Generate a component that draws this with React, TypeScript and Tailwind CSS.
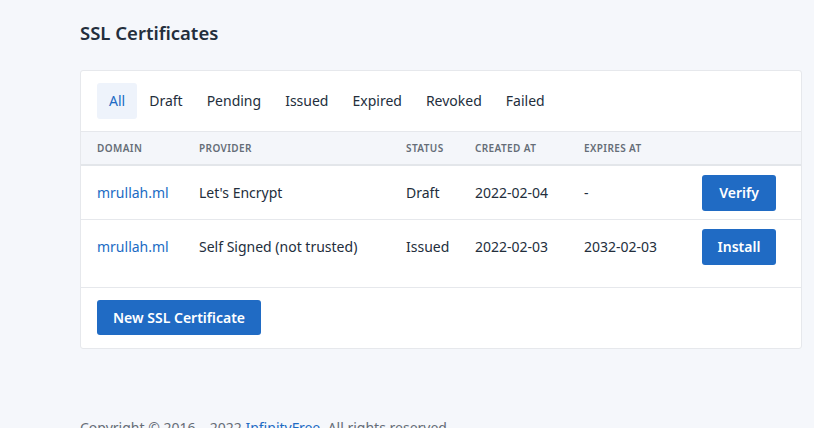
import React from "react";

const tabs = ["All", "Draft", "Pending", "Issued", "Expired", "Revoked", "Failed"];

const rows = [
  { domain: "mrullah.ml", provider: "Let's Encrypt", status: "Draft", created: "2022-02-04", expires: "-", action: "Verify" },
  { domain: "mrullah.ml", provider: "Self Signed (not trusted)", status: "Issued", created: "2022-02-03", expires: "2032-02-03", action: "Install" },
];

export default function App() {
  return (
    <div className="min-h-screen bg-[#f5f7fb] text-[#232e3c] font-['Noto_Sans',sans-serif] text-sm overflow-hidden">
      <div className="ml-[80px] w-[722px] pt-[20px]">
        <h2 className="text-[18.5px] leading-[26px] font-semibold text-[#232e3c]">SSL Certificates</h2>

        <div className="mt-[24px] bg-white border border-[#e6e8ec] rounded-[3px]">
          <div className="flex px-4 py-3">
            {tabs.map((t, i) => (
              <div
                key={t}
                className={
                  i === 0
                    ? "h-[36px] px-3 flex items-center rounded-[3px] bg-[#eef3fb] text-[#206bc4]"
                    : "h-[36px] px-3 flex items-center text-[#232e3c]"
                }
              >
                {t}
              </div>
            ))}
          </div>

          <div className="flex items-center h-[35px] px-4 bg-[#f4f6fa] border-t border-[#e6e8ec] border-b-2 border-b-[#e3e6ea] text-[10px] font-semibold uppercase tracking-[0.04em] text-[#656d77]">
            <div className="w-[102px]">Domain</div>
            <div className="w-[207px]">Provider</div>
            <div className="w-[69px]">Status</div>
            <div className="w-[109px]">Created At</div>
            <div className="w-[118px]">Expires At</div>
            <div className="flex-1"></div>
          </div>

          {rows.map((r, i) => (
            <div
              key={i}
              className={
                i === 0
                  ? "flex items-center h-[54px] px-4 border-b border-[#e6e8ec]"
                  : "flex items-center h-[53px] px-4"
              }
            >
              <div className="w-[102px] text-[#206bc4]">{r.domain}</div>
              <div className="w-[207px]">{r.provider}</div>
              <div className="w-[69px]">{r.status}</div>
              <div className="w-[109px]">{r.created}</div>
              <div className="w-[118px]">{r.expires}</div>
              <button className="w-[74px] h-[36px] rounded-[3px] bg-[#206bc4] text-white font-semibold">
                {r.action}
              </button>
            </div>
          ))}

          <div className="h-[15px] border-b border-[#e6e8ec]"></div>

          <div className="px-4 pt-3 pb-[13px]">
            <button className="h-[35px] px-4 rounded-[3px] bg-[#206bc4] text-white font-semibold">
              New SSL Certificate
            </button>
          </div>
        </div>

        <div className="mt-[69px] leading-5 text-[#656d77]">
          Copyright © 2016 – 2022 <span className="text-[#206bc4]">InfinityFree</span>. All rights reserved.
        </div>
      </div>
    </div>
  );
}
